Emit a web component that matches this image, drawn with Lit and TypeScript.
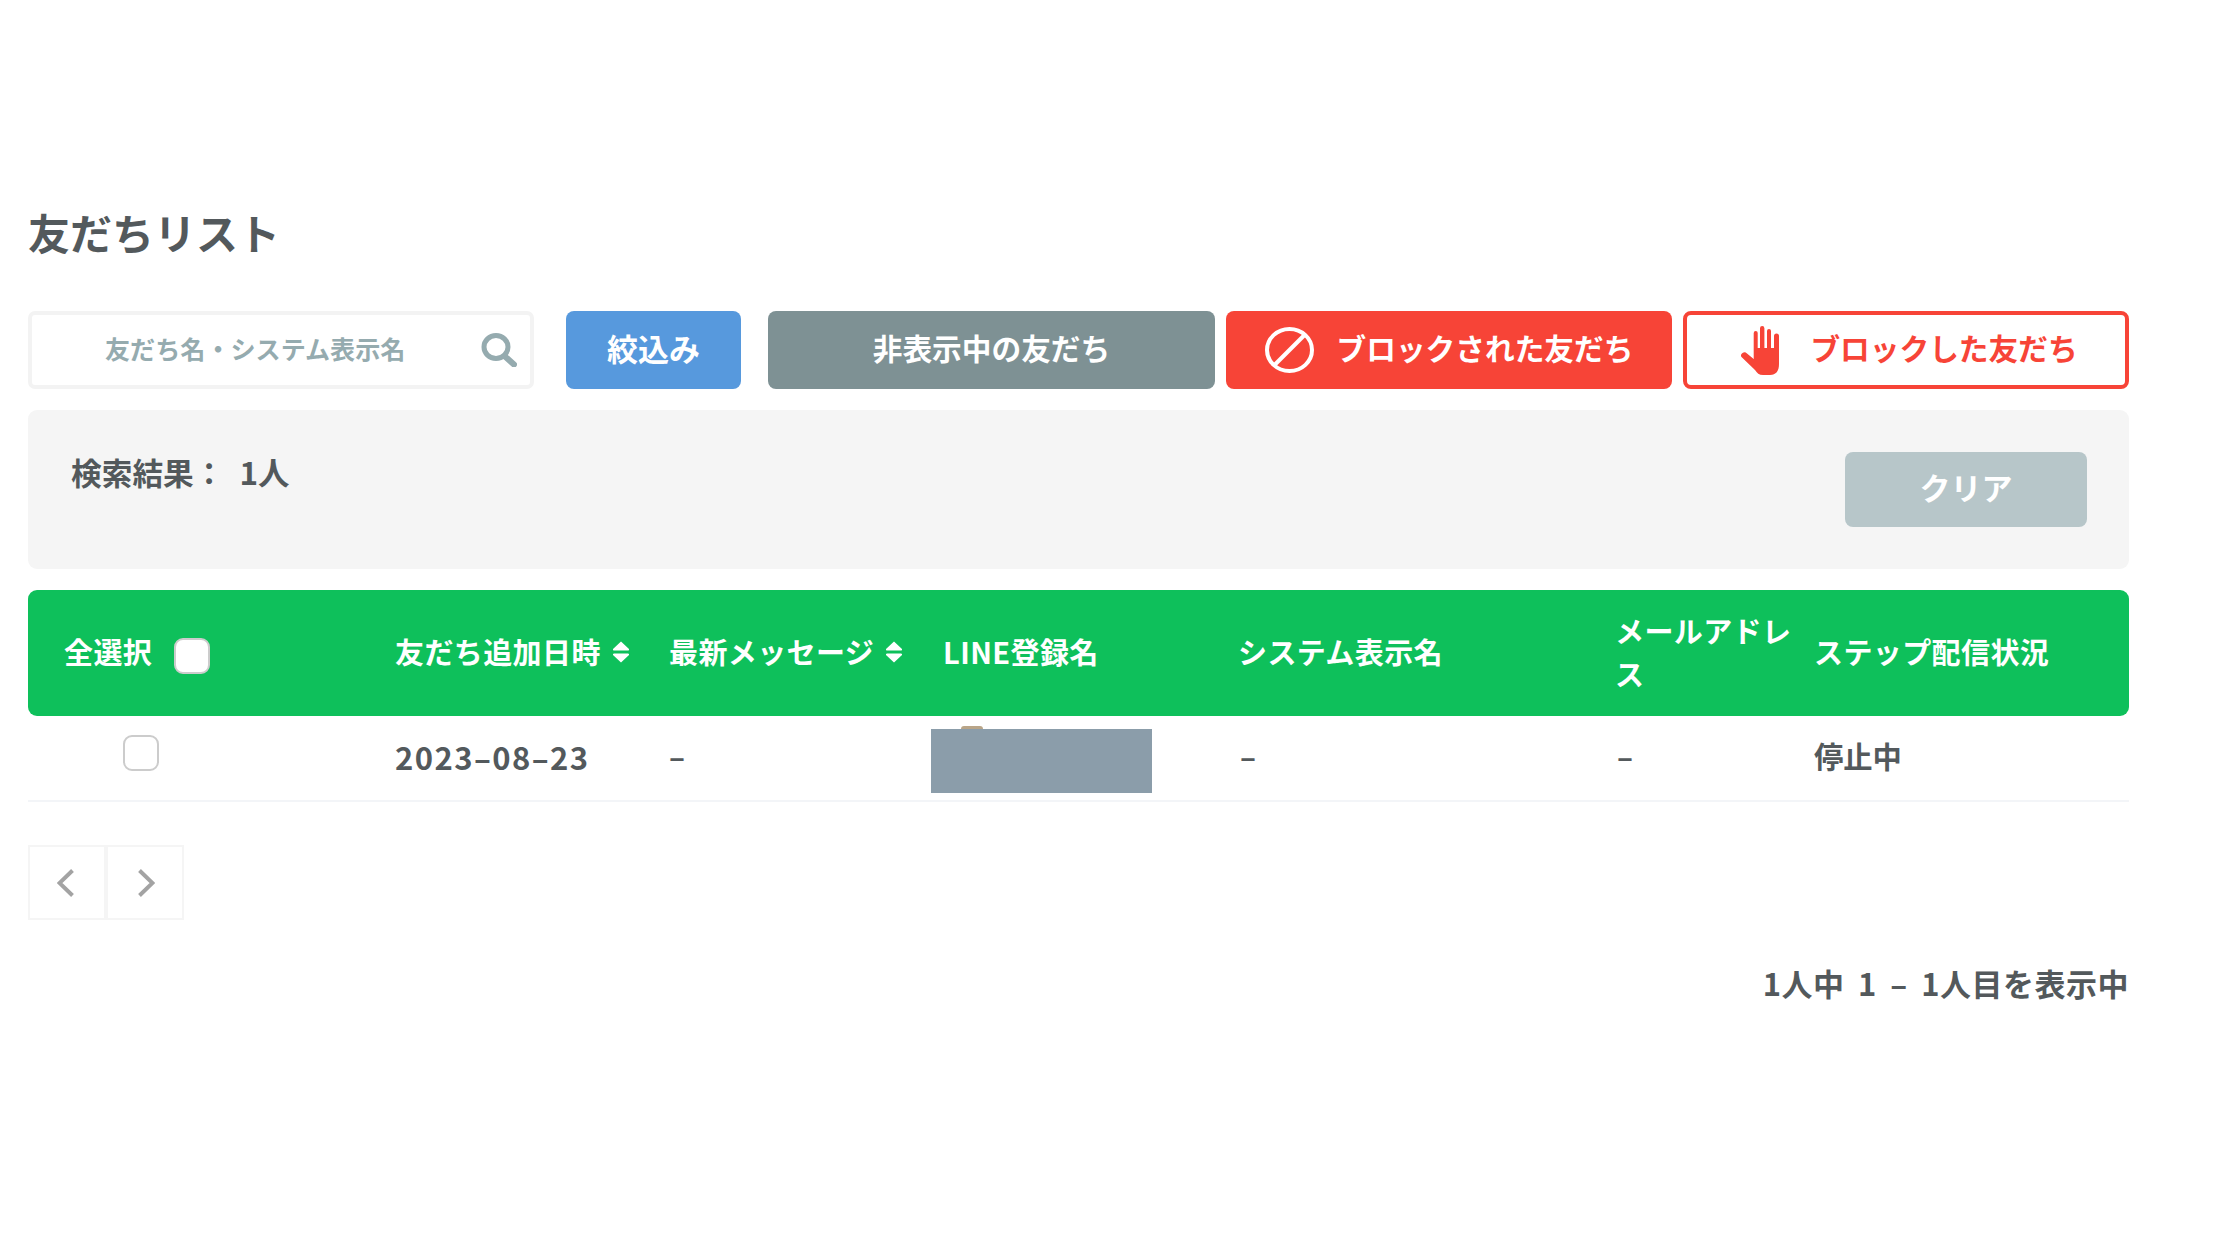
import { LitElement, html, css } from "lit";
import { customElement } from "lit/decorators.js";

const sortIcon = html`<svg class="sort" viewBox="0 0 18 22" width="18" height="22" aria-hidden="true">
  <path d="M9 0.5 L17 8 Q17.5 9.5 16 9.5 H2 Q0.5 9.5 1 8 Z M2 12.5 H16 Q17.5 12.5 17 14 L9 21.5 L1 14 Q0.5 12.5 2 12.5 Z" fill="#fff"/>
</svg>`;

@customElement("app-root")
export class AppRoot extends LitElement {
  static styles = css`
    :host {
      display: block;
      box-sizing: border-box;
      width: 2240px;
      height: 1260px;
      padding: 202px 111px 0 28px;
      background: #fff;
      font-family: "Noto Sans CJK JP", "Noto Sans", sans-serif;
      font-weight: 700;
      color: #53595c;
      font-size: 29px;
    }
    * { box-sizing: border-box; }
    h1 {
      margin: 0 0 49px;
      font-size: 42px;
      line-height: 60px;
      font-weight: 700;
    }
    .toolbar { display: flex; height: 78px; margin-bottom: 21px; }
    .search {
      width: 506px;
      display: flex;
      align-items: center;
      border: 4px solid #f3f3f3;
      border-radius: 7px;
      padding: 0 13px 0 73px;
      margin-right: 32px;
    }
    .search input {
      flex: 1;
      min-width: 0;
      border: 0;
      outline: 0;
      padding: 0 0 5px;
      font: inherit;
      font-size: 25.1px;
      color: #53595c;
      background: transparent;
    }
    .search input::placeholder { color: #95abaf; opacity: 1; }
    .btn {
      display: flex;
      align-items: center;
      justify-content: center;
      border: 0;
      border-radius: 8px;
      color: #fff;
      font: inherit;
      padding: 0;
      font-size: 29.7px;
    }
    .btn span { display: block; margin-top: -5px; }
    .filter { width: 175px; background: #5799dd; margin-right: 27px; font-size: 31px; }
    .hidden { width: 447px; background: #7e9194; margin-right: 11px; }
    .blocked { width: 446px; background: #f74437; margin-right: 11px; gap: 23px; }
    .blocking {
      width: 446px;
      background: #fff;
      border: 4px solid #f74437;
      color: #f74437;
      gap: 31px;
      padding-left: 7px;
    }
    .panel {
      height: 159px;
      background: #f5f5f5;
      border-radius: 9px;
      display: flex;
      justify-content: space-between;
      padding: 42px 42px 42px 43px;
      margin-bottom: 21px;
    }
    .panel p { margin: -2px 0 0 0; line-height: 42px; font-size: 30.7px; }
    .panel .num { margin-left: 8px; font-size: 31.5px; }
    .clear { width: 242px; height: 75px; background: #b7c6c9; font-size: 31px; }
    .clear span { margin-top: -6px; }
    table {
      width: 100%;
      table-layout: fixed;
      border-collapse: separate;
      border-spacing: 0;
    }
    th {
      background: #0ec05b;
      color: #fff;
      height: 126px;
      padding: 0 0 0 36px;
      text-align: left;
      font-size: 29px;
      font-weight: 700;
      line-height: 43px;
      letter-spacing: 0.4px;
    }
    th:first-child { border-radius: 9px 0 0 9px; }
    th:last-child { border-radius: 0 9px 9px 0; }
    .th-txt { display: block; margin-top: -3px; }
    .th-mail { margin-right: -18px; }
    .th-in { display: flex; align-items: center; gap: 11px; white-space: nowrap; }
    .th-in .th-txt { margin-top: -4px; }
    .sel { gap: 22px; }
    .sort { flex: none; margin-top: -2px; }
    td {
      height: 86px;
      padding: 0 0 6px 36px;
      border-bottom: 2px solid #f3f5f8;
      font-size: 29.3px;
      vertical-align: middle;
    }
    td.check { padding: 19px 0 0 95px; vertical-align: top; }
    td.name { padding: 0 0 0 24px; }
    td.sys { padding-left: 38px; }
    td.date { font-size: 31px; letter-spacing: 1.45px; padding-bottom: 4px; }
    .name-wrap { position: relative; width: 221px; height: 64px; margin-top: 5px; }
    .blur { width: 221px; height: 64px; background: #8b9daa; }
    .peek {
      position: absolute;
      left: 30px;
      top: -3px;
      width: 22px;
      height: 3px;
      border-radius: 11px 11px 0 0;
      background: #b9a588;
    }
    input[type="checkbox"] {
      appearance: none;
      display: block;
      width: 36px;
      height: 36px;
      margin: 0;
      background: #fff;
      border: 2px solid #ccc;
      border-radius: 9px;
    }
    .sel input[type="checkbox"] { margin-top: 5px; }
    .pager { display: flex; margin-top: 43px; width: 156px; height: 75px; }
    .pager button {
      flex: 1;
      display: flex;
      align-items: center;
      justify-content: center;
      background: #fff;
      border: 2px solid #f5f5f5;
      padding: 0;
    }
    .count {
      margin: 41px 0 0;
      text-align: right;
      line-height: 44px;
      font-size: 31px;
      letter-spacing: 0.5px;
      word-spacing: 6px;
    }
  `;

  render() {
    return html`
      <h1>友だちリスト</h1>
      <div class="toolbar">
        <label class="search">
          <input type="text" placeholder="友だち名・システム表示名" />
          <svg width="36" height="34" viewBox="0 0 36 34" aria-hidden="true">
            <ellipse cx="15" cy="14" rx="12" ry="11.5" fill="none" stroke="#95abaf" stroke-width="5"/>
            <path d="M23.5 23 L33 31.5" stroke="#95abaf" stroke-width="6" stroke-linecap="round"/>
          </svg>
        </label>
        <button class="btn filter"><span>絞込み</span></button>
        <button class="btn hidden"><span>非表示中の友だち</span></button>
        <button class="btn blocked">
          <svg width="49" height="46" viewBox="0 0 49 46" aria-hidden="true">
            <ellipse cx="24.5" cy="23" rx="22.5" ry="21" fill="none" stroke="#fff" stroke-width="4"/>
            <path d="M40 7.5 L9 38.5" stroke="#fff" stroke-width="4"/>
          </svg>
          <span>ブロックされた友だち</span>
        </button>
        <button class="btn blocking">
          <svg width="38" height="49" viewBox="0 0 38 49" aria-hidden="true">
            <path fill="#f74437" d="M12.7 7 a2 2 0 0 1 4 0 V22 H19 V2.2 a2.2 2.2 0 0 1 4.4 0 V22 H26 V5 a2 2 0 0 1 4 0 V22 H33 V10 a2.5 2.5 0 0 1 5 0 V38 c0 7 -3 11 -9 11 h-7 c-4 0 -6 -2 -8 -5 L0.5 31 c-1 -1.5 -.5 -3 1 -4 s3 -1 4.5 .5 L12.7 33 Z"/>
          </svg>
          <span>ブロックした友だち</span>
        </button>
      </div>
      <section class="panel">
        <p>検索結果： <span class="num">1人</span></p>
        <button class="btn clear"><span>クリア</span></button>
      </section>
      <table>
        <colgroup>
          <col style="width:331px" /><col style="width:274px" /><col style="width:274px" />
          <col style="width:295px" /><col style="width:377px" /><col style="width:199px" /><col />
        </colgroup>
        <thead>
          <tr>
            <th><div class="th-in sel"><span class="th-txt">全選択</span><input type="checkbox" aria-label="全選択" /></div></th>
            <th><div class="th-in"><span class="th-txt">友だち追加日時</span>${sortIcon}</div></th>
            <th><div class="th-in"><span class="th-txt">最新メッセージ</span>${sortIcon}</div></th>
            <th><span class="th-txt">LINE登録名</span></th>
            <th><span class="th-txt">システム表示名</span></th>
            <th><span class="th-txt th-mail">メールアドレス</span></th>
            <th><span class="th-txt">ステップ配信状況</span></th>
          </tr>
        </thead>
        <tbody>
          <tr>
            <td class="check"><input type="checkbox" aria-label="選択" /></td>
            <td class="date">2023–08–23</td>
            <td>–</td>
            <td class="name"><div class="name-wrap"><div class="peek"></div><div class="blur"></div></div></td>
            <td class="sys">–</td>
            <td class="sys">–</td>
            <td>停止中</td>
          </tr>
        </tbody>
      </table>
      <nav class="pager">
        <button aria-label="前へ">
          <svg width="20" height="28" viewBox="0 0 20 28"><path d="M15.5 1.5 L2.5 14 L15.5 26.5" fill="none" stroke="#a3a3a3" stroke-width="4"/></svg>
        </button>
        <button aria-label="次へ">
          <svg width="20" height="28" viewBox="0 0 20 28"><path d="M4.5 1.5 L17.5 14 L4.5 26.5" fill="none" stroke="#a3a3a3" stroke-width="4"/></svg>
        </button>
      </nav>
      <p class="count">1人中 1 – 1人目を表示中</p>
    `;
  }
}
